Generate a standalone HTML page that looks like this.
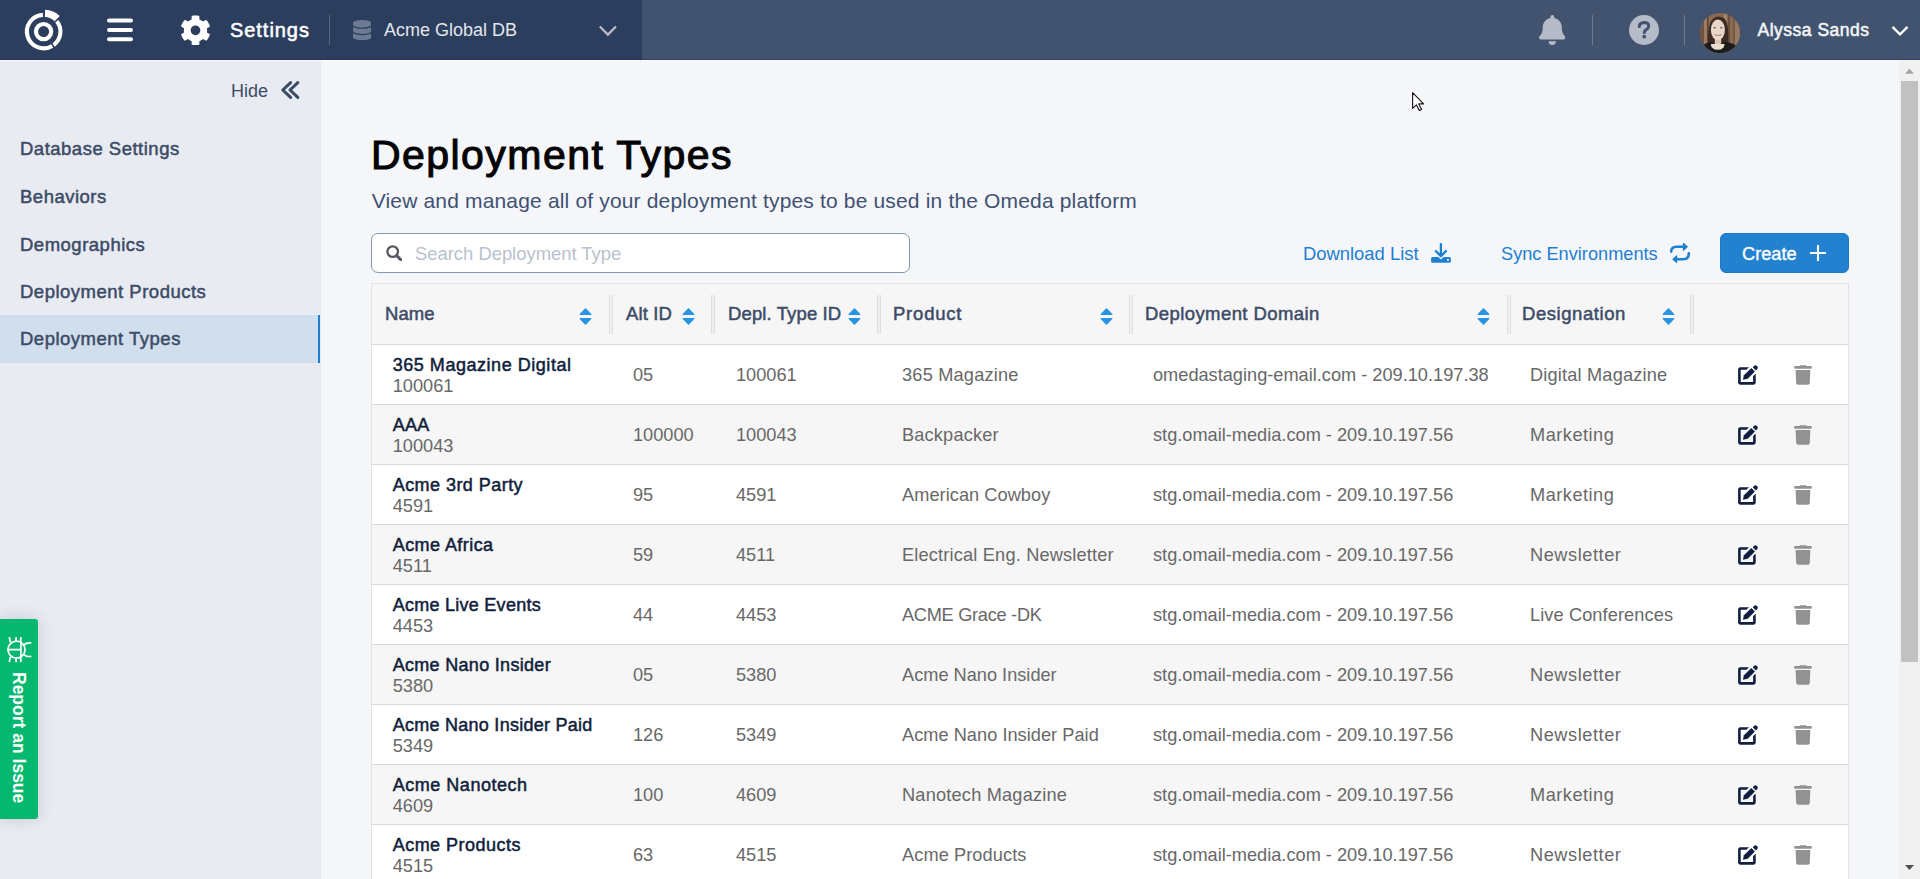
<!DOCTYPE html>
<html>
<head>
<meta charset="utf-8">
<style>
*{box-sizing:border-box;margin:0;padding:0}
html,body{width:1920px;height:879px;overflow:hidden}
body{position:relative;background:#f4f6fa;font-family:"Liberation Sans",sans-serif;color:#3c4b66}
.a{position:absolute;white-space:nowrap;line-height:1}
svg{position:absolute;display:block}
#hdr{position:absolute;left:0;top:0;width:1920px;height:60px;background:#42536f}
#hdrl{position:absolute;left:0;top:0;width:642px;height:60px;background:#2c3e5e}
#side{position:absolute;left:0;top:60px;width:321px;height:819px;background:#e8ebf2}
.nav{font-size:18.5px;font-weight:400;-webkit-text-stroke:0.5px #3c4b66;letter-spacing:0.5px;color:#3c4b66;left:20px}
.th{font-size:18.5px;font-weight:400;-webkit-text-stroke:0.5px #3c4b66;letter-spacing:0.4px;color:#3c4b66}
.tb{font-size:18.2px;color:#686868}
.nm{font-size:18px;font-weight:400;-webkit-text-stroke:0.5px #111e3b;letter-spacing:0.53px;color:#111e3b}
.row{position:absolute;left:372px;width:1476px;height:60px;border-bottom:1px solid #dadada}
</style>
</head>
<body>

<svg width="0" height="0" style="position:absolute">
<defs>
<symbol id="ied" viewBox="0 0 20 20">
<path d="M11 2.15H2.2Q0.1 2.15 0.1 4.25V17.6Q0.1 19.7 2.2 19.7H15.6Q17.7 19.7 17.7 17.6V8.6L15.1 11.2V17.1H2.7V4.75H8.45Z" fill="#0f1f3d"/>
<path d="M4.9 14.8L5.9 10.2L13.4 3.1L16.9 6.6L9.7 13.8Z" fill="#0f1f3d"/>
<path d="M14.7 2.2L16 0.9Q17.4 -0.3 18.8 0.9L19.2 1.3Q20.4 2.7 19.2 4.1L17.9 5.4Z" fill="#0f1f3d"/>
</symbol>
<symbol id="itr" viewBox="0 0 18 20">
<path d="M5.9 0.2H12L12.6 1.5H5.3Z" fill="#929292"/>
<rect x="0.1" y="1.1" width="17.7" height="2.6" rx="1.2" fill="#929292"/>
<path d="M1.6 5H16.3L15.8 17.9Q15.7 19.7 13.9 19.7H4.1Q2.3 19.7 2.2 17.9Z" fill="#929292"/>
</symbol>
<symbol id="isort" viewBox="0 0 13 17">
<path d="M6.2 0.3Q6.5 0 6.8 0.3L12.3 5.9Q12.8 6.9 11.8 6.9H1.2Q0.2 6.9 0.7 5.9Z" fill="#2894e2"/>
<path d="M6.2 16.7Q6.5 17 6.8 16.7L12.3 11.1Q12.8 10.1 11.8 10.1H1.2Q0.2 10.1 0.7 11.1Z" fill="#2894e2"/>
</symbol>
</defs>
</svg>
<!-- HEADER -->
<div id="hdr"></div>
<div id="hdrl"></div>
<div class="a" style="left:230px;top:20.3px;font-size:20px;font-weight:400;-webkit-text-stroke:0.55px #fff;letter-spacing:0.95px;color:#fff">Settings</div>
<div class="a" style="left:384px;top:20.5px;font-size:18px;color:#e3e6eb">Acme Global DB</div>
<div class="a" style="left:1757.5px;top:22.4px;font-size:17.5px;font-weight:400;-webkit-text-stroke:0.55px #f2f4f7;letter-spacing:0.5px;color:#f2f4f7">Alyssa Sands</div>


<svg style="left:0;top:0" width="140" height="60" viewBox="0 0 140 60">
<g fill="none" stroke="#fff">
<circle cx="43.6" cy="31.6" r="7.6" stroke-width="4.2"/>
<path d="M 42.9 14.9 A 16.7 16.7 0 1 0 52.2 45.9" stroke-width="4.1"/>
<path d="M 53.6 45.1 A 16.7 16.7 0 0 0 56.8 21.2" stroke-width="4.1"/>
<path d="M 45 13.4 A 18.2 18.2 0 0 1 57.2 18.6" stroke-width="7.2"/>
</g>
<g fill="#fff">
<rect x="107" y="18.4" width="26" height="4" rx="2"/>
<rect x="107" y="28" width="26" height="4" rx="2"/>
<rect x="107" y="37.2" width="26" height="4" rx="2"/>
</g>
</svg>
<svg style="left:179.5px;top:14.5px" width="31" height="30.7" viewBox="0 0 512 512" preserveAspectRatio="none"><path fill="#fff" d="M487.4 315.7l-42.6-24.6c4.3-23.2 4.3-47 0-70.2l42.6-24.6c4.9-2.8 7.1-8.6 5.5-14-11.1-35.6-30-67.8-54.7-94.6-3.8-4.1-10-5.1-14.8-2.3L380.8 110c-17.9-15.4-38.5-27.3-60.8-35.1V25.8c0-5.6-3.9-10.5-9.4-11.7-36.7-8.2-74.3-7.8-109.2 0-5.5 1.2-9.4 6.100-9.4 11.7V75c-22.2 7.9-42.8 19.8-60.8 35.1L88.7 85.5c-4.9-2.8-11-1.9-14.8 2.3-24.7 26.7-43.6 58.9-54.7 94.6-1.7 5.4.6 11.2 5.5 14L67.3 221c-4.3 23.2-4.3 47 0 70.2l-42.6 24.6c-4.9 2.8-7.1 8.600-5.5 14 11.1 35.6 30 67.8 54.7 94.6 3.8 4.1 10 5.1 14.8 2.3l42.6-24.6c17.9 15.4 38.5 27.3 60.8 35.1v49.2c0 5.6 3.9 10.5 9.4 11.7 36.7 8.2 74.3 7.8 109.2 0 5.5-1.2 9.4-6.1 9.4-11.7v-49.2c22.2-7.9 42.8-19.8 60.8-35.1l42.6 24.6c4.9 2.8 11 1.9 14.8-2.3 24.7-26.7 43.6-58.9 54.7-94.6 1.5-5.5-.7-11.3-5.6-14.1zM256 336c-44.1 0-80-35.9-80-80s35.9-80 80-80 80 35.9 80 80-35.9 80-80 80z"/></svg>
<div style="position:absolute;left:329px;top:15px;width:1px;height:30px;background:#56667f"></div>
<svg style="left:352.5px;top:19.8px" width="18.5" height="20.2" viewBox="0 0 448 512" preserveAspectRatio="none"><path fill="#6c7b93" d="M448 73.143v45.714C448 159.143 347.667 192 224 192S0 159.143 0 118.857V73.143C0 32.857 100.333 0 224 0s224 32.857 224 73.143zM448 176v102.857C448 319.143 347.667 352 224 352S0 319.143 0 278.857V176c48.125 33.143 136.208 48.572 224 48.572S399.874 209.143 448 176zm0 160v102.857C448 479.143 347.667 512 224 512S0 479.143 0 438.857V336c48.125 33.143 136.208 48.572 224 48.572S399.874 369.143 448 336z"/></svg>
<svg style="left:596px;top:22px" width="24" height="16" viewBox="0 0 24 16"><path d="M3.8 4.5L11.9 12.6L20 4.5" fill="none" stroke="#b9c0cb" stroke-width="2.2"/></svg>
<svg style="left:1538.7px;top:15.1px" width="26.6" height="30" viewBox="0 0 448 512" preserveAspectRatio="none"><path fill="#b5bbc7" d="M224 512c35.32 0 63.97-28.65 63.970-64H160.03c0 35.35 28.65 64 63.97 64zm215.39-149.71c-19.32-20.76-55.47-51.99-55.47-154.29 0-77.7-54.48-139.9-127.94-155.16V32c0-17.67-14.32-32-31.98-32s-31.98 14.33-31.98 32v20.84C118.56 68.1 64.08 130.3 64.08 208c0 102.3-36.15 133.53-55.47 154.29-6 6.45-8.66 14.16-8.61 21.71.11 16.4 12.98 32 32.1 32h383.8c19.12 0 32-15.6 32.1-32 .05-7.55-2.61-15.27-8.61-21.71z"/></svg>
<div style="position:absolute;left:1592px;top:15px;width:1px;height:30px;background:#6a7a92"></div>
<svg style="left:1629px;top:15px" width="30" height="30" viewBox="0 0 30 30"><circle cx="15" cy="15" r="15" fill="#b5bbc7"/><path d="M10.3 11.6Q10.6 7.8 15.2 7.6Q19.7 7.7 19.7 11.3Q19.6 13.4 17.3 14.6Q15.4 15.6 15.3 17.6" fill="none" stroke="#40526f" stroke-width="3" stroke-linecap="round"/><circle cx="15.2" cy="21.7" r="1.9" fill="#40526f"/></svg>
<div style="position:absolute;left:1684px;top:15px;width:1px;height:30px;background:#6a7a92"></div>
<svg style="left:1700px;top:12.8px" width="40" height="40" viewBox="0 0 40 40">
<defs><clipPath id="avc"><circle cx="20" cy="20" r="20"/></clipPath></defs>
<g clip-path="url(#avc)">
<rect width="40" height="40" fill="#8a6a52"/>
<rect x="0" y="0" width="4" height="40" fill="#6f5343"/>
<rect x="4" y="0" width="3" height="40" fill="#9c7b62"/>
<rect x="7" y="0" width="1.5" height="40" fill="#5c4336"/>
<rect x="24" y="0" width="3" height="40" fill="#a3836a"/>
<rect x="28" y="0" width="2" height="40" fill="#6a4f3f"/>
<rect x="33" y="0" width="2" height="40" fill="#765a47"/>
<rect x="35" y="0" width="5" height="40" fill="#9a7961"/>
<path d="M8.3 33C7.8 24 8 17 9.5 12C11 6.5 15 3.6 18.5 3.6C23 3.6 26 6.5 27.2 11C28.5 17 28.6 25 28 33Z" fill="#3b2a24"/>
<rect x="14.8" y="22" width="6.4" height="10" fill="#dcc6b6"/><ellipse cx="17.9" cy="16.9" rx="7" ry="10.3" fill="#e8d6c9"/>
<ellipse cx="14.7" cy="14.8" rx="1.3" ry="0.8" fill="#6c5656"/>
<ellipse cx="21.3" cy="14.8" rx="1.3" ry="0.8" fill="#6c5656"/>
<path d="M14.6 21.4Q18 23.6 21.5 21.4" stroke="#b88a80" stroke-width="1.2" fill="none"/>
<path d="M0 40V35Q5 29.5 10.5 29.2L17.5 32L25 29Q33 29.5 40 35V40Z" fill="#1d1a1a"/>
<path d="M10.8 31H24.6Q24.2 36.8 17.7 36.8Q11.2 36.8 10.8 31Z" fill="#e6e0cf"/>
</g>
</svg>
<svg style="left:1888px;top:22px" width="24" height="16" viewBox="0 0 24 16"><path d="M4.5 4.9L12 12.4L19.5 4.9" fill="none" stroke="#fff" stroke-width="2.2"/></svg>
<div style="position:absolute;left:0;top:59px;width:1920px;height:1px;background:rgba(10,25,50,.25)"></div>
<!-- SIDEBAR -->
<div id="side"></div>
<div class="a" style="left:231px;top:82px;font-size:18px;color:#3c4b66">Hide</div>
<div style="position:absolute;left:0;top:315px;width:320px;height:48px;background:#d1deed;border-right:2px solid #1f7fd0"></div>
<div class="a nav" style="top:140.1px">Database Settings</div>
<div class="a nav" style="top:188.1px">Behaviors</div>
<div class="a nav" style="top:235.8px">Demographics</div>
<div class="a nav" style="top:283.4px">Deployment Products</div>
<div class="a nav" style="top:330.4px">Deployment Types</div>


<svg style="left:276px;top:78px" width="28" height="24" viewBox="0 0 28 24"><path d="M14.6 4.6L6.8 12L14.6 19.4M21.8 4.6L14 12L21.8 19.4" fill="none" stroke="#3c4b66" stroke-width="3.1" stroke-linecap="round" stroke-linejoin="round"/></svg>
<div style="position:absolute;left:0;top:60px;width:1920px;height:1px;background:rgba(255,255,255,.7)"></div>
<!-- MAIN -->
<div class="a" style="left:371px;top:134.7px;font-size:41px;font-weight:400;-webkit-text-stroke:1.1px #050505;letter-spacing:1.45px;color:#050505">Deployment Types</div>
<div class="a" style="left:371.7px;top:189.6px;font-size:21px;letter-spacing:0.165px;color:#3f5170">View and manage all of your deployment types to be used in the Omeda platform</div>

<div style="position:absolute;left:371px;top:233px;width:539px;height:40px;background:#fff;border:1px solid #8a96a9;border-radius:7px"></div>
<div class="a" style="left:415px;top:244.8px;font-size:18.4px;color:#b9c1cd">Search Deployment Type</div>

<div class="a" style="left:1303px;top:245px;font-size:18.4px;color:#1f7fd0">Download List</div>
<div class="a" style="left:1501px;top:245px;font-size:18.2px;color:#1f7fd0">Sync Environments</div>
<div style="position:absolute;left:1720px;top:233px;width:129px;height:40px;background:#2282d0;border:1px solid #1e78c6;border-radius:6px"></div>
<div class="a" style="left:1742px;top:245px;font-size:18.2px;color:#fff;-webkit-text-stroke:0.35px #fff">Create</div>


<svg style="left:385.8px;top:245px" width="16.2" height="16" viewBox="0 0 16 16"><circle cx="6.6" cy="6.6" r="5.3" fill="none" stroke="#55595f" stroke-width="2.3"/><path d="M10.6 10.6L14.6 14.6" stroke="#55595f" stroke-width="2.9" stroke-linecap="round"/></svg>
<svg style="left:1426px;top:238px" width="30" height="30" viewBox="0 0 30 30">
<path d="M14.9 6.2V17.5M9.9 13.1L14.9 18.2L19.9 13.1" fill="none" stroke="#1f7fd0" stroke-width="2.3" stroke-linecap="round" stroke-linejoin="round"/>
<path d="M6.6 19H12.2L14.9 21.5L17.6 19H23.4Q24.9 19 24.9 20.5V23.3Q24.9 24.8 23.4 24.8H6.6Q5.1 24.8 5.1 23.3V20.5Q5.1 19 6.6 19Z" fill="#1f7fd0"/>
<rect x="21" y="21" width="1.9" height="1.7" fill="#e8f1fa"/>
</svg>
<svg style="left:1665px;top:238px" width="30" height="30" viewBox="0 0 30 30">
<path d="M6.2 13.6Q6.2 8.7 11.5 8.7H19.5M23.8 15.3Q23.8 21.2 18.5 21.2H10.5" fill="none" stroke="#1f7fd0" stroke-width="2.6" stroke-linecap="round"/>
<path d="M18.4 5.5L22.1 8.7L18.4 12.2Z M11.6 17.9L8.1 21.2L11.6 24.4Z" fill="#1f7fd0" stroke="#1f7fd0" stroke-width="1.2" stroke-linejoin="round"/>
</svg>
<svg style="left:1808px;top:243px" width="20" height="20" viewBox="0 0 20 20"><path d="M10 2.1V18M2 10H18" stroke="#fff" stroke-width="2.1"/></svg>
<!-- TABLE -->
<div id="tbl" style="position:absolute;left:371px;top:283px;width:1478px;height:600px;border:1px solid #e3e3e3;background:#fff"></div>
<div style="position:absolute;left:372px;top:284px;width:1476px;height:61px;background:#f6f6f6;border-bottom:1px solid #d9d9d9"></div>
<div class="a th" style="left:385px;top:304.6px;letter-spacing:0.06px">Name</div>
<div class="a th" style="left:626px;top:304.6px;letter-spacing:0.13px">Alt ID</div>
<div class="a th" style="left:728px;top:304.6px;letter-spacing:0.12px">Depl. Type ID</div>
<div class="a th" style="left:893px;top:304.6px;letter-spacing:0.78px">Product</div>
<div class="a th" style="left:1145px;top:304.6px;letter-spacing:0.42px">Deployment Domain</div>
<div class="a th" style="left:1522px;top:304.6px;letter-spacing:0.56px">Designation</div>

<svg style="left:579.1px;top:307.9px" width="13" height="17" viewBox="0 0 13 17"><use href="#isort"/></svg>
<svg style="left:682px;top:307.9px" width="13" height="17" viewBox="0 0 13 17"><use href="#isort"/></svg>
<svg style="left:848.1px;top:307.9px" width="13" height="17" viewBox="0 0 13 17"><use href="#isort"/></svg>
<svg style="left:1099.7px;top:307.9px" width="13" height="17" viewBox="0 0 13 17"><use href="#isort"/></svg>
<svg style="left:1477.2px;top:307.9px" width="13" height="17" viewBox="0 0 13 17"><use href="#isort"/></svg>
<svg style="left:1661.5px;top:307.9px" width="13" height="17" viewBox="0 0 13 17"><use href="#isort"/></svg>
<div style="position:absolute;left:609px;top:295px;width:4px;height:39px;border-left:1px solid #dedede;border-right:1px solid #dedede;background:#efefef"></div>
<div style="position:absolute;left:711px;top:295px;width:4px;height:39px;border-left:1px solid #dedede;border-right:1px solid #dedede;background:#efefef"></div>
<div style="position:absolute;left:877.3px;top:295px;width:4px;height:39px;border-left:1px solid #dedede;border-right:1px solid #dedede;background:#efefef"></div>
<div style="position:absolute;left:1128.8px;top:295px;width:4px;height:39px;border-left:1px solid #dedede;border-right:1px solid #dedede;background:#efefef"></div>
<div style="position:absolute;left:1507.3px;top:295px;width:4px;height:39px;border-left:1px solid #dedede;border-right:1px solid #dedede;background:#efefef"></div>
<div style="position:absolute;left:1690px;top:295px;width:4px;height:39px;border-left:1px solid #dedede;border-right:1px solid #dedede;background:#efefef"></div>
<div class="row" style="top:345px;background:#fff"></div>
<div class="a nm" style="left:392.7px;top:355.8px;letter-spacing:0.537px">365 Magazine Digital</div>
<div class="a tb" style="left:392.7px;top:376.6px">100061</div>
<div class="a tb" style="left:633px;top:365.8px">05</div>
<div class="a tb" style="left:736px;top:365.8px">100061</div>
<div class="a tb" style="left:902px;top:365.8px;letter-spacing:0.2px">365 Magazine</div>
<div class="a tb" style="left:1153px;top:365.8px">omedastaging-email.com - 209.10.197.38</div>
<div class="a tb" style="left:1530px;top:365.8px;letter-spacing:0.18px">Digital Magazine</div>
<svg class="ied" style="left:1738px;top:365px" width="20" height="20" viewBox="0 0 20 20"><use href="#ied"/></svg>
<svg class="itr" style="left:1794px;top:365px" width="18" height="20" viewBox="0 0 18 20"><use href="#itr"/></svg>
<div class="row" style="top:405px;background:#f6f6f6"></div>
<div class="a nm" style="left:392.7px;top:415.8px;letter-spacing:0.244px">AAA</div>
<div class="a tb" style="left:392.7px;top:436.6px">100043</div>
<div class="a tb" style="left:633px;top:425.8px">100000</div>
<div class="a tb" style="left:736px;top:425.8px">100043</div>
<div class="a tb" style="left:902px;top:425.8px;letter-spacing:0.17px">Backpacker</div>
<div class="a tb" style="left:1153px;top:425.8px">stg.omail-media.com - 209.10.197.56</div>
<div class="a tb" style="left:1530px;top:425.8px;letter-spacing:0.5px">Marketing</div>
<svg class="ied" style="left:1738px;top:425px" width="20" height="20" viewBox="0 0 20 20"><use href="#ied"/></svg>
<svg class="itr" style="left:1794px;top:425px" width="18" height="20" viewBox="0 0 18 20"><use href="#itr"/></svg>
<div class="row" style="top:465px;background:#fff"></div>
<div class="a nm" style="left:392.7px;top:475.8px;letter-spacing:0.451px">Acme 3rd Party</div>
<div class="a tb" style="left:392.7px;top:496.6px">4591</div>
<div class="a tb" style="left:633px;top:485.8px">95</div>
<div class="a tb" style="left:736px;top:485.8px">4591</div>
<div class="a tb" style="left:902px;top:485.8px;letter-spacing:0.05px">American Cowboy</div>
<div class="a tb" style="left:1153px;top:485.8px">stg.omail-media.com - 209.10.197.56</div>
<div class="a tb" style="left:1530px;top:485.8px;letter-spacing:0.5px">Marketing</div>
<svg class="ied" style="left:1738px;top:485px" width="20" height="20" viewBox="0 0 20 20"><use href="#ied"/></svg>
<svg class="itr" style="left:1794px;top:485px" width="18" height="20" viewBox="0 0 18 20"><use href="#itr"/></svg>
<div class="row" style="top:525px;background:#f6f6f6"></div>
<div class="a nm" style="left:392.7px;top:535.8px;letter-spacing:0.439px">Acme Africa</div>
<div class="a tb" style="left:392.7px;top:556.6px">4511</div>
<div class="a tb" style="left:633px;top:545.8px">59</div>
<div class="a tb" style="left:736px;top:545.8px">4511</div>
<div class="a tb" style="left:902px;top:545.8px;letter-spacing:0.178px">Electrical Eng. Newsletter</div>
<div class="a tb" style="left:1153px;top:545.8px">stg.omail-media.com - 209.10.197.56</div>
<div class="a tb" style="left:1530px;top:545.8px;letter-spacing:0.55px">Newsletter</div>
<svg class="ied" style="left:1738px;top:545px" width="20" height="20" viewBox="0 0 20 20"><use href="#ied"/></svg>
<svg class="itr" style="left:1794px;top:545px" width="18" height="20" viewBox="0 0 18 20"><use href="#itr"/></svg>
<div class="row" style="top:585px;background:#fff"></div>
<div class="a nm" style="left:392.7px;top:595.8px;letter-spacing:0.263px">Acme Live Events</div>
<div class="a tb" style="left:392.7px;top:616.6px">4453</div>
<div class="a tb" style="left:633px;top:605.8px">44</div>
<div class="a tb" style="left:736px;top:605.8px">4453</div>
<div class="a tb" style="left:902px;top:605.8px;letter-spacing:-0.28px">ACME Grace -DK</div>
<div class="a tb" style="left:1153px;top:605.8px">stg.omail-media.com - 209.10.197.56</div>
<div class="a tb" style="left:1530px;top:605.8px;letter-spacing:0.1px">Live Conferences</div>
<svg class="ied" style="left:1738px;top:605px" width="20" height="20" viewBox="0 0 20 20"><use href="#ied"/></svg>
<svg class="itr" style="left:1794px;top:605px" width="18" height="20" viewBox="0 0 18 20"><use href="#itr"/></svg>
<div class="row" style="top:645px;background:#f6f6f6"></div>
<div class="a nm" style="left:392.7px;top:655.8px;letter-spacing:0.308px">Acme Nano Insider</div>
<div class="a tb" style="left:392.7px;top:676.6px">5380</div>
<div class="a tb" style="left:633px;top:665.8px">05</div>
<div class="a tb" style="left:736px;top:665.8px">5380</div>
<div class="a tb" style="left:902px;top:665.8px">Acme Nano Insider</div>
<div class="a tb" style="left:1153px;top:665.8px">stg.omail-media.com - 209.10.197.56</div>
<div class="a tb" style="left:1530px;top:665.8px;letter-spacing:0.55px">Newsletter</div>
<svg class="ied" style="left:1738px;top:665px" width="20" height="20" viewBox="0 0 20 20"><use href="#ied"/></svg>
<svg class="itr" style="left:1794px;top:665px" width="18" height="20" viewBox="0 0 18 20"><use href="#itr"/></svg>
<div class="row" style="top:705px;background:#fff"></div>
<div class="a nm" style="left:392.7px;top:715.8px;letter-spacing:0.263px">Acme Nano Insider Paid</div>
<div class="a tb" style="left:392.7px;top:736.6px">5349</div>
<div class="a tb" style="left:633px;top:725.8px">126</div>
<div class="a tb" style="left:736px;top:725.8px">5349</div>
<div class="a tb" style="left:902px;top:725.8px;letter-spacing:0.03px">Acme Nano Insider Paid</div>
<div class="a tb" style="left:1153px;top:725.8px">stg.omail-media.com - 209.10.197.56</div>
<div class="a tb" style="left:1530px;top:725.8px;letter-spacing:0.55px">Newsletter</div>
<svg class="ied" style="left:1738px;top:725px" width="20" height="20" viewBox="0 0 20 20"><use href="#ied"/></svg>
<svg class="itr" style="left:1794px;top:725px" width="18" height="20" viewBox="0 0 18 20"><use href="#itr"/></svg>
<div class="row" style="top:765px;background:#f6f6f6"></div>
<div class="a nm" style="left:392.7px;top:775.8px;letter-spacing:0.529px">Acme Nanotech</div>
<div class="a tb" style="left:392.7px;top:796.6px">4609</div>
<div class="a tb" style="left:633px;top:785.8px">100</div>
<div class="a tb" style="left:736px;top:785.8px">4609</div>
<div class="a tb" style="left:902px;top:785.8px;letter-spacing:0.2px">Nanotech Magazine</div>
<div class="a tb" style="left:1153px;top:785.8px">stg.omail-media.com - 209.10.197.56</div>
<div class="a tb" style="left:1530px;top:785.8px;letter-spacing:0.5px">Marketing</div>
<svg class="ied" style="left:1738px;top:785px" width="20" height="20" viewBox="0 0 20 20"><use href="#ied"/></svg>
<svg class="itr" style="left:1794px;top:785px" width="18" height="20" viewBox="0 0 18 20"><use href="#itr"/></svg>
<div class="row" style="top:825px;background:#fff"></div>
<div class="a nm" style="left:392.7px;top:835.8px;letter-spacing:0.471px">Acme Products</div>
<div class="a tb" style="left:392.7px;top:856.6px">4515</div>
<div class="a tb" style="left:633px;top:845.8px">63</div>
<div class="a tb" style="left:736px;top:845.8px">4515</div>
<div class="a tb" style="left:902px;top:845.8px;letter-spacing:0.09px">Acme Products</div>
<div class="a tb" style="left:1153px;top:845.8px">stg.omail-media.com - 209.10.197.56</div>
<div class="a tb" style="left:1530px;top:845.8px;letter-spacing:0.55px">Newsletter</div>
<svg class="ied" style="left:1738px;top:845px" width="20" height="20" viewBox="0 0 20 20"><use href="#ied"/></svg>
<svg class="itr" style="left:1794px;top:845px" width="18" height="20" viewBox="0 0 18 20"><use href="#itr"/></svg>

<!-- SCROLLBAR -->
<div style="position:absolute;left:1899px;top:60px;width:21px;height:819px;background:#f1f1f1"></div>
<div style="position:absolute;left:1901px;top:81px;width:17px;height:581px;background:#c1c1c1"></div>
<svg style="left:1899px;top:60px" width="21" height="819" viewBox="0 0 21 819"><path d="M10.5 8.8L15 13.8H6Z" fill="#a3a3a3"/><path d="M6 805H15L10.5 810Z" fill="#505050"/></svg>

<!-- REPORT TAB -->
<div style="position:absolute;left:0;top:619px;width:38px;height:200px;background:#06b86f;border-radius:0 3px 3px 0;box-shadow:0 0 16px rgba(40,50,80,.18)"></div>

<svg style="left:0;top:619px" width="38" height="200" viewBox="0 0 38 200">
<g fill="none" stroke="#fff" stroke-width="1.75" stroke-linecap="round">
<circle cx="16.5" cy="30.7" r="8.5"/>
<path d="M8 30.7H20.9M20.9 22.9V38.5"/>
<path d="M9.4 18.8L10.2 22.6M16.1 18.8V22.2M20.9 18.8L20.5 22.6M9.4 42.4L10.2 38.6M16.1 42.4V39M20.9 42.4L20.5 38.6"/>
<path d="M24.2 25.6Q26.5 23.6 30.6 23.9M24.2 35.8Q26.5 37.8 30.6 37.5"/>
</g>
</svg>
<div class="a" style="left:0;top:0;font-size:17.5px;font-weight:700;color:#fff;transform-origin:0 0;transform:translate(27.4px,672px) rotate(90deg)">Report an Issue</div>

<svg style="left:1410px;top:90px" width="18" height="24" viewBox="0 0 18 24"><path d="M2.6 2.6V18.4L6.4 14.8L9.3 20.5L11.6 19.4L8.8 13.9H13.6Z" fill="#fff" stroke="#1a1a1a" stroke-width="1.15" stroke-linejoin="round"/></svg>
</body>
</html>
